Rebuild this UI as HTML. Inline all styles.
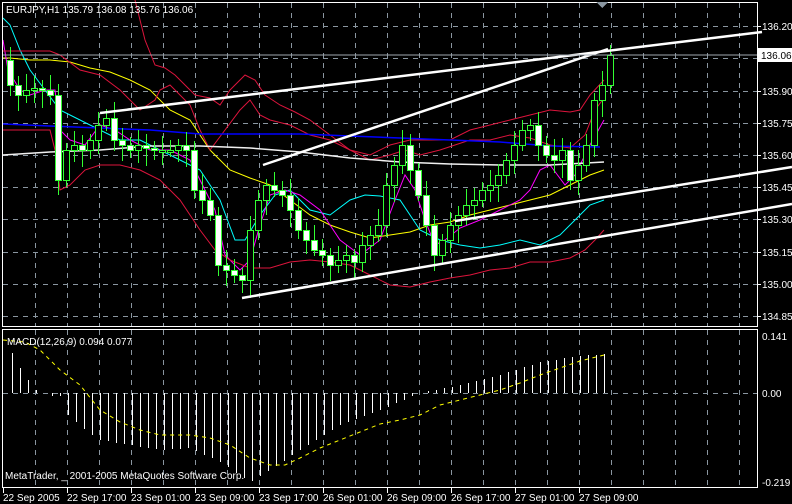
<!DOCTYPE html>
<html><head><meta charset="utf-8"><style>
html,body{margin:0;padding:0;background:#000;width:792px;height:504px;overflow:hidden}
svg{display:block}
text{font-family:"Liberation Sans",sans-serif;font-size:10px;fill:#fff}
</style></head><body>
<svg id="s" width="792" height="504" viewBox="0 0 792 504" xmlns="http://www.w3.org/2000/svg" shape-rendering="crispEdges">
<rect width="792" height="504" fill="#000"/>
<g id="grid" stroke="#8a96a0" stroke-width="1" stroke-dasharray="5,5"></g>
<g id="lines" fill="none" shape-rendering="auto"></g>
<g id="candles"></g>
<g id="macd"></g>
<g id="trend" stroke="#fff" stroke-width="2.5" shape-rendering="auto">
<line x1="100" y1="113" x2="762" y2="32"/>
<line x1="263" y1="165" x2="608" y2="49"/>
<line x1="242" y1="298" x2="792" y2="204"/>
<line x1="455" y1="221" x2="792" y2="167"/>
</g>
<line x1="2" y1="55" x2="757" y2="55" stroke="#a0a8b0"/>
<rect x="2.5" y="2.5" width="755" height="324" fill="none" stroke="#fff"/>
<rect x="2.5" y="329.5" width="755" height="158" fill="none" stroke="#fff"/>
<polygon points="596,2 608,2 602,8" fill="#8a96a0"/>
<text x="6" y="13">EURJPY,H1  135.79 136.08 135.76 136.06</text>
<g id="axis"></g>
<rect x="758" y="48" width="34" height="14" fill="#fff"/>
<text x="761" y="59" style="fill:#000">136.06</text>
<text x="7" y="345">MACD(12,26,9) 0.094 0.077</text>
<text x="5" y="479">MetaTrader, _ 2001-2005 MetaQuotes Software Corp.</text>
<text x="762" y="340">0.141</text>
<text x="762" y="397">0.00</text>
<text x="762" y="486">-0.219</text>
</svg>
<script>
(function(){
var NS="http://www.w3.org/2000/svg";
function el(p,t,a){var e=document.createElementNS(NS,t);for(var k in a)e.setAttribute(k,a[k]);p.appendChild(e);return e;}
var g=document.getElementById('grid');
for(var k=1;k<=23;k++){var x=3+32*k+0.5;el(g,'line',{x1:x,y1:3,x2:x,y2:326});el(g,'line',{x1:x,y1:330,x2:x,y2:487});}
var py=[26,58,91,123,155,187,219,252,284,316];
var pl=["136.20","","135.90","135.75","135.60","135.45","135.30","135.15","135.00","134.85"];
var ax=document.getElementById('axis');
py.forEach(function(y,i){el(g,'line',{x1:3,y1:y+.5,x2:757,y2:y+.5});if(pl[i]){var t=el(ax,'text',{x:762,y:y+4});t.textContent=pl[i];}el(ax,'line',{x1:757,y1:y+.5,x2:761,y2:y+.5,stroke:'#fff'});});
el(g,'line',{x1:3,y1:393.5,x2:757,y2:393.5});
var dl=["22 Sep 2005","22 Sep 17:00","23 Sep 01:00","23 Sep 09:00","23 Sep 17:00","26 Sep 01:00","26 Sep 09:00","26 Sep 17:00","27 Sep 01:00","27 Sep 09:00"];
dl.forEach(function(s,i){var x=3+64*i;var t=el(ax,'text',{x:x,y:501});t.textContent=s;el(ax,'line',{x1:x+.5,y1:488,x2:x+.5,y2:493,stroke:'#fff'});});
var C=[60,85,95,90,88,90,95,180,150,145,150,140,125,118,140,145,150,145,148,150,150,150,145,150,190,200,215,265,270,275,280,230,200,185,190,195,210,230,240,250,255,265,260,255,262,245,235,225,185,165,145,170,195,225,255,240,225,215,205,200,190,185,175,160,145,130,125,145,155,160,150,180,165,145,100,85,55];
var cg=document.getElementById('candles');
for(var i=1;i<C.length;i++){var x=2+8*i;var o=C[i-1],c=C[i];var hi=Math.min(o,c)-6-(i*7%11),lo=Math.max(o,c)+6+(i*5%13);
el(cg,'line',{x1:x+.5,y1:hi,x2:x+.5,y2:lo,stroke:'#32ff32'});
var tp=Math.min(o,c),h=Math.max(2,Math.abs(o-c));
el(cg,'rect',{x:x-2.5,y:tp+.5,width:6,height:h,fill:c>o?'#fff':'#000',stroke:'#32ff32'});}
var L=document.getElementById('lines');
function pl2(pts,col,w){el(L,'polyline',{points:pts,stroke:col,'stroke-width':w||1});}
pl2("3,58 10,58 30,60 50,60 70,62 90,68 110,72 130,80 150,90 170,110 190,120 210,150 230,170 250,178 270,185 290,200 310,215 330,225 350,232 370,238 390,235 410,232 430,225 450,222 470,215 490,210 510,205 530,200 550,195 570,185 590,175 604,170","#ffff00");
pl2("3,18 10,25 20,50 30,70 45,90 60,110 80,120 100,130 120,140 140,140 160,150 180,160 200,170 220,200 235,240 245,240 260,215 275,195 290,190 300,200 310,210 330,215 350,200 365,195 380,196 400,200 420,230 440,240 460,245 480,248 500,245 520,240 540,245 560,235 575,220 590,205 604,200","#00ffff");
pl2("3,40 8,70 20,90 30,95 45,90 55,90 60,130 70,140 85,145 100,125 115,130 130,140 150,150 170,150 190,160 205,190 215,210 225,255 240,270 250,260 260,225 270,195 285,190 300,195 320,210 340,240 360,255 380,240 395,200 405,175 415,190 425,220 435,245 445,240 460,228 480,220 500,210 520,200 530,190 540,170 550,165 565,185 575,175 590,145 604,120","#ff00ff");
pl2("3,51 20,51 50,51 60,55 80,70 100,75 120,90 140,110 155,100 160,90 170,85 190,105 200,130 210,150 225,130 240,110 250,100 260,115 270,120 290,125 310,135 330,140 350,150 370,160 390,155 405,150 420,155 440,150 455,145 470,140 490,140 510,135 530,138 550,145 570,148 585,135 595,110 604,98","#dc143c");
pl2("3,130 20,130 50,130 55,150 60,190 70,185 85,170 100,165 120,165 140,170 160,180 180,200 200,230 215,250 230,260 250,268 270,268 290,262 310,260 330,262 350,265 370,275 390,285 410,287 430,282 450,278 470,275 490,270 510,268 530,262 550,262 570,258 585,250 595,240 604,230","#dc143c");
pl2("135,0 145,40 155,65 165,68 175,75 185,85 195,95 210,98 220,105 230,90 245,75 255,80 265,95 280,105 295,112 310,120 330,135 350,150 370,155 390,145 410,140 430,140 450,140 470,130 490,125 510,120 530,115 550,110 570,112 580,110 590,95 604,80","#dc143c");
pl2("3,124 50,126 100,128 150,130 200,134 250,134 300,134 350,136 400,138 450,140 500,142 550,146 600,147","#0000ff",1.5);
pl2("3,155 50,152 100,150 150,146 200,146 250,148 300,152 350,158 400,162 450,164 500,165 550,165 604,162","#f0f0f0",1.5);
var M=document.getElementById('macd');
var K=[[12,353],[20,368],[28,380],[36,390],[44,393],[52,396],[60,396],[68,415],[84,429],[100,440],[130,445],[160,450],[190,448],[220,462],[250,482],[270,470],[300,450],[340,425],[380,410],[420,393],[460,385],[500,375],[540,362],[580,356],[604,354]];
function hv(x){for(var j=1;j<K.length;j++){if(x<=K[j][0]){var a=K[j-1],b=K[j];return a[1]+(b[1]-a[1])*(x-a[0])/(b[0]-a[0]);}}return 354;}
for(var x=12;x<=604;x+=8){var y=Math.round(hv(x));el(M,'line',{x1:x+.5,y1:393,x2:x+.5,y2:y,stroke:'#fff'});}
el(M,'polyline',{points:"3,340 25,342 40,350 60,370 80,385 100,410 120,422 140,430 160,435 190,435 210,438 230,445 250,458 270,465 285,465 300,458 320,448 340,440 360,432 380,424 400,420 420,415 440,405 460,400 480,395 500,390 520,383 540,375 560,368 580,361 604,355",fill:"none",stroke:"#ffff00","stroke-dasharray":"4,4","shape-rendering":"auto"});
})();
</script>
</body></html>
